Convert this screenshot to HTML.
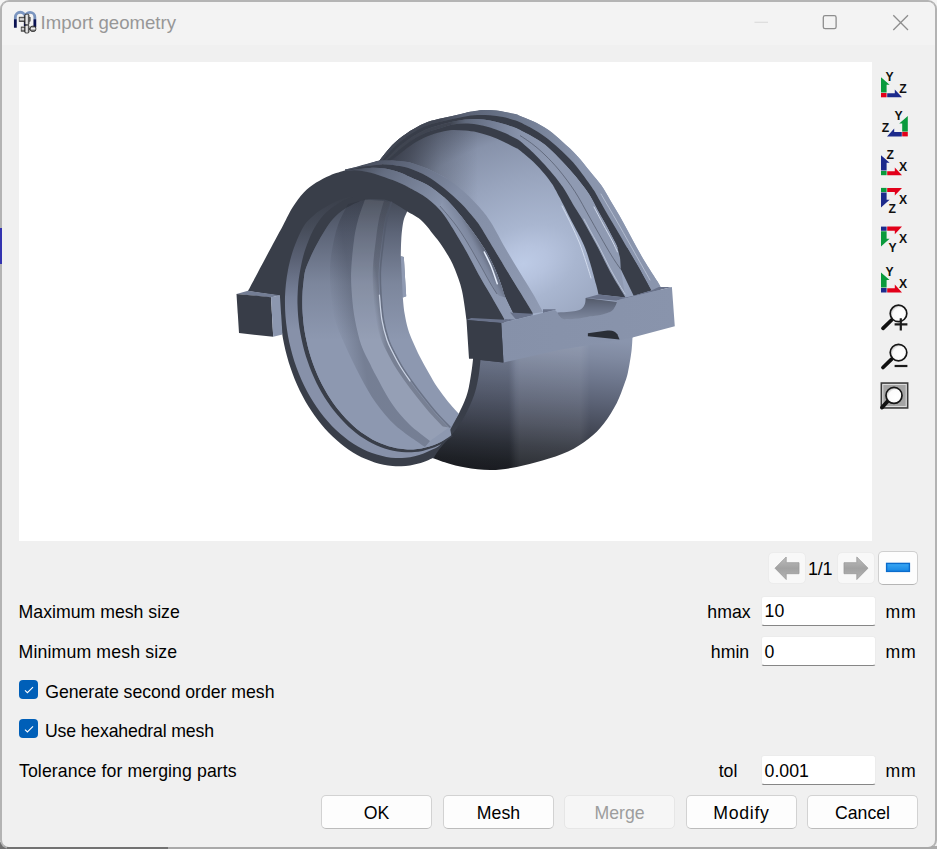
<!DOCTYPE html>
<html><head><meta charset="utf-8"><title>Import geometry</title>
<style>
html,body{margin:0;padding:0;}
body{width:937px;height:849px;overflow:hidden;background:#f0f0f0;position:relative;font-family:"Liberation Sans",sans-serif;color:#000;}
.abs{position:absolute;}
#bgtop{left:0;top:0;width:937px;height:10px;background:#f4f4f4;}
#win{left:0;top:0;width:933px;height:845px;border:2px solid #b3b3b3;border-top-color:#b4b4b4;border-bottom-color:#a9a9a9;border-radius:9px;background:#f0f0f0;overflow:hidden;}
#titlebar{left:0;top:0;width:933px;height:43px;background:#f3f3f3;}
#title{left:40.6px;top:11.6px;font-size:18.6px;line-height:22px;color:#979797;white-space:nowrap;}
#canvas{left:19px;top:62px;width:853px;height:479px;background:#fff;}
.lbl{font-size:17.7px;line-height:22px;white-space:nowrap;}
.inp{left:761px;width:115px;height:30px;background:#fff;border:1px solid #ececec;border-bottom:1px solid #868686;border-radius:3px;box-sizing:border-box;font-size:17.7px;line-height:29.6px;padding-left:2.6px;padding-top:0.8px;}
.btn{top:795px;width:111px;height:34px;box-sizing:border-box;border:1px solid #d2d2d2;border-bottom-color:#bcbcbc;border-radius:5px;background:#fdfdfd;text-align:center;font-size:17.7px;line-height:34.6px;}
.btn.dis{background:#f6f6f6;border-color:#e6e6e6;color:#9d9d9d;}
.nb{top:552px;height:32px;box-sizing:border-box;border-radius:5px;}
.cb{left:19px;width:19px;height:19px;border-radius:4px;background:#005fb8;}
</style></head><body>
<div class="abs" id="bgtop"></div>
<div class="abs" style="left:0;top:842px;width:170px;height:7px;background:#6f6f6f"></div>
<div class="abs" style="left:170px;top:846px;width:767px;height:3px;background:#ababab"></div>
<div class="abs" style="left:0;top:227px;width:3px;height:37px;background:#2a2aa8"></div>
<div class="abs" id="win">
<div class="abs" id="titlebar"></div>
</div>
<div class="abs" style="left:7px;top:847px;width:161px;height:2px;background:#727272"></div>
<div class="abs" style="left:0;top:228px;width:2px;height:36px;background:#3434b0"></div>
<!-- title icon -->
<svg class="abs" style="left:12px;top:8px" width="28" height="27" viewBox="12 8 28 27">
<defs><linearGradient id="gm" gradientUnits="userSpaceOnUse" x1="0" y1="10" x2="0" y2="28"><stop offset="0" stop-color="#7d98c2"/><stop offset="0.5" stop-color="#7791bb"/><stop offset="0.54" stop-color="#0b1352"/><stop offset="1" stop-color="#0a1150"/></linearGradient>
<linearGradient id="gg" gradientUnits="userSpaceOnUse" x1="24.5" y1="0" x2="29.2" y2="0"><stop offset="0" stop-color="#3c3c3c"/><stop offset="0.3" stop-color="#cfcfcf"/><stop offset="0.5" stop-color="#f4f4f4"/><stop offset="0.7" stop-color="#c4c4c4"/><stop offset="1" stop-color="#353535"/></linearGradient>
<linearGradient id="gs" x1="0" y1="0" x2="0" y2="1"><stop offset="0" stop-color="#555"/><stop offset="0.45" stop-color="#f2f2f2"/><stop offset="1" stop-color="#4a4a4a"/></linearGradient></defs>
<path d="M15.35 27.8V17.2a4.95 4.95 0 0 1 9.9 0V26M25.25 17.2a4.8 4.8 0 0 1 9.6 0V27.2" fill="none" stroke="url(#gm)" stroke-width="2.8"/>
<rect x="19.2" y="17.2" width="6" height="4.3" fill="url(#gs)" stroke="#2e2e2e" stroke-width="0.7"/>
<rect x="28.6" y="17.4" width="1.6" height="3.8" fill="#888" stroke="#2e2e2e" stroke-width="0.5"/>
<rect x="24.7" y="14.2" width="4.3" height="10.6" rx="1.2" fill="url(#gg)" stroke="#262626" stroke-width="0.8"/>
<rect x="21.2" y="27" width="4" height="4.2" fill="url(#gs)" stroke="#2e2e2e" stroke-width="0.7"/>
<rect x="30.2" y="26.2" width="5.6" height="5.2" rx="2" fill="url(#gs)" stroke="#2a2a2a" stroke-width="0.9"/>
<rect x="24.7" y="25.2" width="4.3" height="7.8" rx="1.2" fill="url(#gg)" stroke="#262626" stroke-width="0.8"/>
<path d="M28.9 29H30.4" stroke="#333" stroke-width="1.6"/>
</svg>
<div class="abs" id="title">Import geometry</div>
<!-- caption buttons -->
<svg class="abs" style="left:740px;top:0" width="190" height="44" viewBox="740 0 190 44">
<path d="M754.5 22.3H768" stroke="#dcdcdc" stroke-width="1.2" fill="none"/>
<rect x="823.3" y="15.7" width="12.8" height="13" rx="1.8" fill="none" stroke="#8d8d8d" stroke-width="1.3"/>
<path d="M893.3 15.3L908 30M908 15.3L893.3 30" stroke="#8d8d8d" stroke-width="1.3" fill="none"/>
</svg>
<div class="abs" id="canvas"></div>
<svg class="abs" style="left:19px;top:62px" width="853" height="479" viewBox="19 62 853 479"><defs><linearGradient id="gShell" gradientUnits="userSpaceOnUse" x1="542" y1="336" x2="532" y2="474"><stop offset="0" stop-color="#8a95ad"/><stop offset="0.12" stop-color="#808aa1"/><stop offset="0.28" stop-color="#6e778d"/><stop offset="0.46" stop-color="#5a6174"/><stop offset="0.64" stop-color="#454a58"/><stop offset="0.8" stop-color="#2f333c"/><stop offset="0.92" stop-color="#22252b"/><stop offset="1" stop-color="#1c1e24"/></linearGradient><radialGradient id="gMid" gradientUnits="userSpaceOnUse" cx="523" cy="264" r="165" gradientTransform="translate(523 264) rotate(-22) scale(1.55 1) translate(-523 -264)"><stop offset="0" stop-color="#bdcbe6"/><stop offset="0.1" stop-color="#b6c3de"/><stop offset="0.22" stop-color="#a9b6d0"/><stop offset="0.5" stop-color="#98a4bd"/><stop offset="0.75" stop-color="#8792aa"/><stop offset="0.9" stop-color="#6a7388"/><stop offset="1" stop-color="#565d6f"/></radialGradient><linearGradient id="gBore" gradientUnits="userSpaceOnUse" x1="0" y1="198" x2="0" y2="340"><stop offset="0" stop-color="#434956"/><stop offset="0.25" stop-color="#5d6578"/><stop offset="0.6" stop-color="#7c869c"/><stop offset="1" stop-color="#8d98b0"/></linearGradient><linearGradient id="gStripD" gradientUnits="userSpaceOnUse" x1="440" y1="120" x2="580" y2="120"><stop offset="0" stop-color="#414653"/><stop offset="0.18" stop-color="#596174"/><stop offset="0.57" stop-color="#6f7a90"/><stop offset="0.93" stop-color="#8590a8"/><stop offset="1" stop-color="#8a95ad"/></linearGradient><linearGradient id="gStripC" gradientUnits="userSpaceOnUse" x1="450" y1="125" x2="550" y2="135"><stop offset="0" stop-color="#3f4450"/><stop offset="0.15" stop-color="#5f687b"/><stop offset="0.4" stop-color="#727c93"/><stop offset="0.7" stop-color="#8893ab"/><stop offset="1" stop-color="#8f9ab2"/></linearGradient><linearGradient id="gStripB" gradientUnits="userSpaceOnUse" x1="360" y1="165" x2="540" y2="313"><stop offset="0" stop-color="#474d5b"/><stop offset="0.12" stop-color="#5a6275"/><stop offset="0.4" stop-color="#828da5"/><stop offset="1" stop-color="#8f9ab2"/></linearGradient><linearGradient id="gStripA" gradientUnits="userSpaceOnUse" x1="350" y1="170" x2="515" y2="319"><stop offset="0" stop-color="#454b58"/><stop offset="0.12" stop-color="#646d81"/><stop offset="0.4" stop-color="#8792aa"/><stop offset="1" stop-color="#8f9ab2"/></linearGradient><linearGradient id="gLugF" gradientUnits="userSpaceOnUse" x1="500" y1="0" x2="676" y2="0"><stop offset="0" stop-color="#8691a9"/><stop offset="1" stop-color="#8994ac"/></linearGradient><linearGradient id="gNotch" gradientUnits="userSpaceOnUse" x1="0" y1="298" x2="0" y2="320"><stop offset="0" stop-color="#535a6a"/><stop offset="0.5" stop-color="#697287"/><stop offset="1" stop-color="#7f899f"/></linearGradient><linearGradient id="gCham" gradientUnits="userSpaceOnUse" x1="0" y1="200" x2="0" y2="330"><stop offset="0" stop-color="#3b404b"/><stop offset="0.2" stop-color="#454b58"/><stop offset="0.45" stop-color="#5a6174"/><stop offset="0.75" stop-color="#78829a"/><stop offset="1" stop-color="#8791a9"/></linearGradient><filter id="fb" x="-5%" y="-5%" width="110%" height="110%"><feGaussianBlur stdDeviation="0.7"/></filter><filter id="fb2" x="-20%" y="-20%" width="140%" height="140%"><feGaussianBlur stdDeviation="0.45"/></filter><clipPath id="cpShell"><path d="M476.0 330.0L640.0 330.0L632.5 337.4C632.3 339.7 632.2 345.2 631.5 351.0C630.8 356.8 629.2 366.3 628.0 372.0C626.8 377.7 625.9 379.9 624.0 385.0C622.1 390.1 620.1 396.5 616.8 402.9C613.4 409.3 608.6 417.4 603.9 423.4C599.2 429.4 594.6 434.1 588.6 438.8C582.6 443.5 575.8 448.0 568.1 451.6C560.4 455.2 551.0 458.0 542.5 460.6C534.0 463.2 525.3 465.4 516.8 467.0C508.2 468.6 499.7 470.0 491.2 470.1C482.7 470.2 473.0 468.7 465.6 467.5C458.2 466.3 452.4 464.6 447.0 463.0C441.6 461.4 435.3 458.8 433.0 458.0L429.5 457.5C430.4 456.1 432.0 452.7 435.0 448.8C438.0 444.9 443.8 438.6 447.5 434.0C451.2 429.4 454.2 425.7 457.2 421.0C460.2 416.3 463.0 410.9 465.3 405.8C467.6 400.7 469.6 395.8 471.2 390.5C472.8 385.2 473.9 379.2 474.8 374.0C475.7 368.8 476.2 361.5 476.5 359.0Z"/></clipPath><linearGradient id="gShellBand" gradientUnits="userSpaceOnUse" x1="510" y1="0" x2="590" y2="0"><stop offset="0" stop-color="#ffffff00"/><stop offset="0.12" stop-color="#ffffff12"/><stop offset="0.88" stop-color="#ffffff12"/><stop offset="1" stop-color="#ffffff00"/></linearGradient><linearGradient id="gShellL" gradientUnits="userSpaceOnUse" x1="478" y1="0" x2="516" y2="0"><stop offset="0" stop-color="#0000001c"/><stop offset="0.8" stop-color="#0000001c"/><stop offset="1" stop-color="#00000000"/></linearGradient><linearGradient id="gMidL" gradientUnits="userSpaceOnUse" x1="383" y1="0" x2="478" y2="0"><stop offset="0" stop-color="#2e323cd0"/><stop offset="0.28" stop-color="#343843a0"/><stop offset="0.6" stop-color="#3a3f4a48"/><stop offset="1" stop-color="#3a3f4a00"/></linearGradient><linearGradient id="gSliver" gradientUnits="userSpaceOnUse" x1="470" y1="262" x2="489" y2="252"><stop offset="0" stop-color="#8f9ab2"/><stop offset="0.55" stop-color="#7b859c"/><stop offset="1" stop-color="#4a5060"/></linearGradient><linearGradient id="gB11" gradientUnits="userSpaceOnUse" x1="330" y1="300" x2="353" y2="296"><stop offset="0" stop-color="#20243000"/><stop offset="1" stop-color="#20243038"/></linearGradient><linearGradient id="gB22" gradientUnits="userSpaceOnUse" x1="373" y1="300" x2="380" y2="299"><stop offset="0" stop-color="#20243000"/><stop offset="1" stop-color="#20243040"/></linearGradient></defs><path d="M476.0 330.0L640.0 330.0L632.5 337.4C632.3 339.7 632.2 345.2 631.5 351.0C630.8 356.8 629.2 366.3 628.0 372.0C626.8 377.7 625.9 379.9 624.0 385.0C622.1 390.1 620.1 396.5 616.8 402.9C613.4 409.3 608.6 417.4 603.9 423.4C599.2 429.4 594.6 434.1 588.6 438.8C582.6 443.5 575.8 448.0 568.1 451.6C560.4 455.2 551.0 458.0 542.5 460.6C534.0 463.2 525.3 465.4 516.8 467.0C508.2 468.6 499.7 470.0 491.2 470.1C482.7 470.2 473.0 468.7 465.6 467.5C458.2 466.3 452.4 464.6 447.0 463.0C441.6 461.4 435.3 458.8 433.0 458.0L429.5 457.5C430.4 456.1 432.0 452.7 435.0 448.8C438.0 444.9 443.8 438.6 447.5 434.0C451.2 429.4 454.2 425.7 457.2 421.0C460.2 416.3 463.0 410.9 465.3 405.8C467.6 400.7 469.6 395.8 471.2 390.5C472.8 385.2 473.9 379.2 474.8 374.0C475.7 368.8 476.2 361.5 476.5 359.0Z" fill="url(#gShell)" />
<path d="M510.0 340.0L590.0 330.0L590.0 460.0L510.0 472.0Z" fill="url(#gShellBand)" />
<path d="M430.0 355.0L520.0 355.0L520.0 475.0L430.0 475.0Z" fill="url(#gShellL)" clip-path="url(#cpShell)"/>
<path d="M379.4 160.6C380.5 159.2 383.6 154.9 386.2 151.9C388.8 148.9 391.0 146.0 395.0 142.5C399.0 139.0 405.1 134.3 410.0 131.1C414.9 127.9 419.4 125.4 424.1 123.4C428.8 121.4 433.6 120.3 438.3 119.1C443.0 117.9 447.9 117.0 452.4 116.0C456.8 115.0 461.2 113.7 465.0 112.9C468.8 112.1 471.6 111.5 475.0 111.0C478.4 110.5 481.4 110.0 485.6 110.0C489.8 110.0 495.1 110.2 500.0 110.9C504.9 111.6 511.7 113.3 515.0 114.1C518.3 114.9 517.0 114.7 520.0 115.9C523.0 117.1 528.2 119.0 533.0 121.3C537.8 123.6 543.5 126.5 548.5 130.0C553.5 133.4 558.0 137.8 562.7 142.0C567.4 146.2 572.1 150.3 576.8 155.4C581.5 160.5 586.8 167.5 590.9 172.4C595.0 177.3 597.9 180.4 601.1 185.0C604.3 189.6 607.1 194.9 610.1 199.9C613.1 204.9 616.1 209.7 619.1 214.9C622.1 220.1 625.0 225.8 628.0 231.3C631.0 236.8 634.0 242.6 637.0 248.0C640.0 253.4 642.6 258.0 646.0 263.5C649.4 269.0 654.8 277.2 657.2 281.1C659.6 285.0 660.0 286.0 660.5 287.0L660.5 287.0L660.0 330.0L480.0 330.0L440.0 216.0L410.0 188.0L370.0 173.0L345.0 172.0L345.0 169.4L360.0 166.2Z" fill="url(#gMid)" />
<path d="M379.4 160.6C380.5 159.2 383.6 154.9 386.2 151.9C388.8 148.9 391.0 146.0 395.0 142.5C399.0 139.0 405.1 134.3 410.0 131.1C414.9 127.9 419.4 125.4 424.1 123.4C428.8 121.4 433.6 120.3 438.3 119.1C443.0 117.9 447.9 117.0 452.4 116.0C456.8 115.0 461.2 113.7 465.0 112.9C468.8 112.1 473.3 111.3 475.0 111.0L478.0 111.0L478.3 206.1L461.2 189.0L444.2 177.1L427.1 168.5L410.0 162.4L392.3 160.5L378.8 160.8Z" fill="url(#gMidL)" />
<path d="M379.4 160.6C380.5 159.2 383.6 154.9 386.2 151.9C388.8 148.9 391.0 146.0 395.0 142.5C399.0 139.0 405.1 134.3 410.0 131.1C414.9 127.9 419.4 125.4 424.1 123.4C428.8 121.4 433.6 120.3 438.3 119.1C443.0 117.9 447.9 117.0 452.4 116.0C456.8 115.0 461.2 113.7 465.0 112.9C468.8 112.1 471.6 111.5 475.0 111.0C478.4 110.5 481.4 110.0 485.6 110.0C489.8 110.0 495.1 110.2 500.0 110.9C504.9 111.6 511.7 113.3 515.0 114.1C518.3 114.9 517.0 114.7 520.0 115.9C523.0 117.1 528.2 119.0 533.0 121.3C537.8 123.6 543.5 126.5 548.5 130.0C553.5 133.4 558.0 137.8 562.7 142.0C567.4 146.2 572.1 150.3 576.8 155.4C581.5 160.5 586.8 167.5 590.9 172.4C595.0 177.3 597.9 180.4 601.1 185.0C604.3 189.6 607.1 194.9 610.1 199.9C613.1 204.9 616.1 209.7 619.1 214.9C622.1 220.1 625.0 225.8 628.0 231.3C631.0 236.8 634.0 242.6 637.0 248.0C640.0 253.4 642.6 258.0 646.0 263.5C649.4 269.0 654.8 277.2 657.2 281.1C659.6 285.0 660.0 286.0 660.5 287.0L651.3 290.5C649.2 286.8 643.0 275.1 639.0 268.0C635.0 260.9 630.5 253.5 627.3 248.0C624.1 242.5 622.3 239.4 619.8 235.1C617.3 230.8 614.9 226.6 612.4 222.4C609.9 218.2 607.4 214.1 604.9 209.7C602.4 205.3 599.2 199.5 597.4 196.2C595.5 192.9 595.5 192.6 593.8 190.0C592.1 187.4 590.8 185.5 587.4 180.9C584.0 176.3 578.0 167.9 573.3 162.5C568.6 157.1 563.8 152.7 559.1 148.4C554.4 144.1 549.4 139.9 545.0 136.7C540.6 133.5 537.2 131.4 533.0 129.0C528.8 126.6 523.0 123.8 520.0 122.3C517.0 120.8 517.8 121.2 515.0 120.3C512.2 119.4 507.2 117.8 503.0 117.0C498.8 116.2 494.3 115.6 490.0 115.3C485.7 115.0 481.2 114.8 477.0 115.0C472.8 115.2 469.1 115.8 465.0 116.5C460.9 117.2 456.7 118.1 452.4 119.0C448.1 119.9 443.6 120.8 439.0 122.0C434.4 123.2 429.7 124.3 425.0 126.3C420.3 128.3 415.8 130.9 411.0 134.0C406.2 137.1 400.3 141.7 396.5 145.0C392.7 148.3 390.6 151.2 388.0 154.0C385.4 156.8 382.2 160.7 381.0 162.0Z" fill="url(#gStripD)" />
<path d="M381.0 162.0C382.2 160.7 385.4 156.8 388.0 154.0C390.6 151.2 392.7 148.3 396.5 145.0C400.3 141.7 406.2 137.1 411.0 134.0C415.8 130.9 420.3 128.3 425.0 126.3C429.7 124.3 434.4 123.2 439.0 122.0C443.6 120.8 448.1 119.9 452.4 119.0C456.7 118.1 460.9 117.2 465.0 116.5C469.1 115.8 472.8 115.2 477.0 115.0C481.2 114.8 485.7 115.0 490.0 115.3C494.3 115.6 498.8 116.2 503.0 117.0C507.2 117.8 512.2 119.4 515.0 120.3C517.8 121.2 517.0 120.8 520.0 122.3C523.0 123.8 528.8 126.6 533.0 129.0C537.2 131.4 540.6 133.5 545.0 136.7C549.4 139.9 554.4 144.1 559.1 148.4C563.8 152.7 568.6 157.1 573.3 162.5C578.0 167.9 584.0 176.3 587.4 180.9C590.8 185.5 592.1 187.4 593.8 190.0C595.5 192.6 595.5 192.9 597.4 196.2C599.2 199.5 602.4 205.3 604.9 209.7C607.4 214.1 609.9 218.2 612.4 222.4C614.9 226.6 617.3 230.8 619.8 235.1C622.3 239.4 624.1 242.5 627.3 248.0C630.5 253.5 635.0 260.9 639.0 268.0C643.0 275.1 649.2 286.8 651.3 290.5L620.8 269.3C620.7 267.6 620.8 262.6 620.3 259.0C619.8 255.4 618.9 251.6 617.6 248.0C616.3 244.4 614.5 241.5 612.4 237.3C610.3 233.2 607.4 227.7 604.9 223.1C602.4 218.5 599.9 214.3 597.4 209.7C594.9 205.1 592.3 199.4 589.9 195.5C587.5 191.6 586.0 189.6 583.2 186.0C580.4 182.4 577.3 178.4 573.3 173.8C569.3 169.2 563.8 163.1 559.1 158.3C554.4 153.5 549.4 148.4 545.0 144.8C540.6 141.2 537.2 139.5 533.0 137.0C528.8 134.5 523.0 131.6 520.0 130.0C517.0 128.4 517.8 128.7 515.0 127.7C512.2 126.7 507.2 125.0 503.0 123.8C498.8 122.6 494.3 121.3 490.0 120.5C485.7 119.7 481.2 119.2 477.0 119.0C472.8 118.8 469.1 119.0 465.0 119.4C460.9 119.9 456.6 120.8 452.4 121.7C448.2 122.6 444.4 123.7 440.0 125.0C435.6 126.3 430.7 127.5 426.0 129.5C421.3 131.5 416.7 134.0 412.0 137.0C407.3 140.0 401.8 144.3 398.0 147.5C394.2 150.7 392.2 153.4 389.5 156.0C386.8 158.6 382.8 161.8 381.5 163.0Z" fill="#393e49" filter="url(#fb)"/>
<path d="M381.5 163.0C382.8 161.8 386.8 158.6 389.5 156.0C392.2 153.4 394.2 150.7 398.0 147.5C401.8 144.3 407.3 140.0 412.0 137.0C416.7 134.0 421.3 131.5 426.0 129.5C430.7 127.5 435.6 126.3 440.0 125.0C444.4 123.7 448.2 122.6 452.4 121.7C456.6 120.8 460.9 119.9 465.0 119.4C469.1 119.0 472.8 118.8 477.0 119.0C481.2 119.2 485.7 119.7 490.0 120.5C494.3 121.3 498.8 122.6 503.0 123.8C507.2 125.0 512.2 126.7 515.0 127.7C517.8 128.7 517.0 128.4 520.0 130.0C523.0 131.6 528.8 134.5 533.0 137.0C537.2 139.5 540.6 141.2 545.0 144.8C549.4 148.4 554.4 153.5 559.1 158.3C563.8 163.1 569.3 169.2 573.3 173.8C577.3 178.4 580.4 182.4 583.2 186.0C586.0 189.6 587.5 191.6 589.9 195.5C592.3 199.4 594.9 205.1 597.4 209.7C599.9 214.3 602.4 218.5 604.9 223.1C607.4 227.7 610.3 233.2 612.4 237.3C614.5 241.5 616.3 244.4 617.6 248.0C618.9 251.6 619.8 255.4 620.3 259.0C620.8 262.6 620.7 267.6 620.8 269.3L625.5 297.5C623.0 293.2 614.8 279.9 610.2 271.7C605.7 263.4 601.6 254.5 598.2 248.0C594.8 241.5 592.5 237.6 589.9 232.8C587.3 228.0 585.0 223.6 582.5 219.4C580.0 215.2 578.0 212.3 575.0 207.4C572.0 202.5 567.4 194.2 564.8 190.0C562.1 185.8 561.2 184.8 559.1 182.0C557.0 179.2 554.5 176.1 552.1 173.3C549.8 170.5 548.2 168.5 545.0 165.0C541.8 161.5 537.2 156.5 533.0 152.5C528.8 148.5 523.0 143.4 520.0 141.0C517.0 138.6 517.8 139.3 515.0 137.9C512.2 136.5 507.2 134.0 503.0 132.3C498.8 130.6 494.3 128.8 490.0 127.5C485.7 126.2 481.2 125.2 477.0 124.6C472.8 123.9 469.1 123.6 465.0 123.6C460.9 123.6 456.5 123.9 452.4 124.6C448.3 125.3 444.7 126.7 440.5 128.0C436.3 129.3 431.6 130.4 427.0 132.3C422.4 134.2 417.6 136.6 413.0 139.5C408.4 142.4 403.2 146.5 399.5 149.5C395.8 152.5 393.4 155.1 390.5 157.5C387.6 159.9 383.4 162.9 382.0 164.0Z" fill="url(#gStripC)" />
<path d="M382.0 164.0C383.4 162.9 387.6 159.9 390.5 157.5C393.4 155.1 395.8 152.5 399.5 149.5C403.2 146.5 408.4 142.4 413.0 139.5C417.6 136.6 422.4 134.2 427.0 132.3C431.6 130.4 436.3 129.3 440.5 128.0C444.7 126.7 448.3 125.3 452.4 124.6C456.5 123.9 460.9 123.6 465.0 123.6C469.1 123.6 472.8 123.9 477.0 124.6C481.2 125.2 485.7 126.2 490.0 127.5C494.3 128.8 498.8 130.6 503.0 132.3C507.2 134.0 512.2 136.5 515.0 137.9C517.8 139.3 517.0 138.6 520.0 141.0C523.0 143.4 528.8 148.5 533.0 152.5C537.2 156.5 541.8 161.5 545.0 165.0C548.2 168.5 549.8 170.5 552.1 173.3C554.5 176.1 557.0 179.2 559.1 182.0C561.2 184.8 562.1 185.8 564.8 190.0C567.4 194.2 572.0 202.5 575.0 207.4C578.0 212.3 580.0 215.2 582.5 219.4C585.0 223.6 587.3 228.0 589.9 232.8C592.5 237.6 594.8 241.5 598.2 248.0C601.6 254.5 605.7 263.4 610.2 271.7C614.8 279.9 623.0 293.2 625.5 297.5L598.5 294.6C598.1 292.9 597.5 289.8 596.1 284.6C594.7 279.4 592.1 269.4 590.3 263.5C588.5 257.6 587.2 253.4 585.5 249.0C583.8 244.6 581.9 240.7 580.2 237.3C578.5 233.9 577.2 231.7 575.5 228.5C573.8 225.3 572.1 222.1 570.0 218.0C567.9 213.9 565.4 208.7 563.0 204.0C560.6 199.3 557.4 193.3 555.6 190.0C553.8 186.7 553.9 186.6 552.1 184.0C550.3 181.4 548.2 178.2 545.0 174.5C541.8 170.8 537.2 165.5 533.0 161.5C528.8 157.5 523.0 152.7 520.0 150.4C517.0 148.1 517.8 149.0 515.0 147.5C512.2 146.0 507.2 143.4 503.0 141.5C498.8 139.6 494.3 137.5 490.0 136.0C485.7 134.5 481.2 133.2 477.0 132.3C472.8 131.4 469.1 131.0 465.0 130.6C460.9 130.2 456.4 129.8 452.4 130.0C448.4 130.2 445.1 130.9 441.0 132.0C436.9 133.1 432.0 134.4 427.5 136.3C423.0 138.2 418.3 140.6 414.0 143.3C409.7 146.0 405.2 149.8 401.5 152.5C397.8 155.2 395.2 157.4 392.0 159.5C388.8 161.6 384.1 164.1 382.5 165.0Z" fill="#393e49" filter="url(#fb)"/>
<path d="M520.0 135.5C522.2 137.0 528.8 141.2 533.0 144.5C537.2 147.8 540.7 150.8 545.0 155.0C549.3 159.2 554.0 163.9 559.0 170.0C564.0 176.1 569.8 183.7 575.0 191.7C580.2 199.7 584.7 208.6 590.0 218.0C595.3 227.4 602.8 240.8 607.0 248.0C611.2 255.2 612.7 257.4 615.0 261.0C617.3 264.6 619.8 267.9 620.8 269.3" fill="none" stroke="#4a5060" stroke-width="0.8" opacity="0.8"/>
<path d="M620.8 269.3L633.7 295.8L651.3 290.5L639.0 268.0L627.3 248.0L617.6 248.0L620.3 259.0Z" fill="#393e49" />
<path d="M594.0 207.0C595.5 209.8 600.0 218.3 603.0 224.0C606.0 229.7 609.9 236.3 612.3 241.0C614.7 245.7 616.6 250.2 617.5 252.0" fill="none" stroke="#e6eefc" stroke-linecap="round" filter="url(#fb2)" stroke-width="1" opacity="0.75"/>
<path d="M601.0 194.0C603.3 198.0 609.8 209.0 615.0 218.0C620.2 227.0 626.2 237.7 632.0 248.0C637.8 258.3 647.0 274.7 650.0 280.0" fill="none" stroke="#e6eefc" stroke-linecap="round" filter="url(#fb2)" stroke-width="0.9" opacity="0.5"/>
<path d="M584.0 219.0C585.2 221.3 588.8 228.1 591.5 233.0C594.2 237.9 596.6 242.0 600.0 248.5C603.4 255.0 607.8 264.4 612.0 272.0C616.2 279.6 622.8 290.3 625.0 294.0" fill="none" stroke="#e6eefc" stroke-linecap="round" filter="url(#fb2)" stroke-width="0.9" opacity="0.55"/>
<path d="M562.0 206.0C563.5 209.0 568.1 217.8 571.0 224.0C573.9 230.2 577.0 236.7 579.5 243.0C582.0 249.3 584.1 256.2 586.0 262.0C587.9 267.8 590.2 275.3 591.0 278.0" fill="none" stroke="#e6eefc" stroke-linecap="round" filter="url(#fb2)" stroke-width="1" opacity="0.7"/>
<path d="M345.0 169.6C346.6 169.2 350.8 168.3 354.9 167.2C359.0 166.1 365.9 164.2 369.9 163.1C373.9 162.0 375.1 161.2 378.8 160.8C382.5 160.4 387.1 160.2 392.3 160.5C397.5 160.8 404.2 161.1 410.0 162.4C415.8 163.7 421.4 166.1 427.1 168.5C432.8 170.9 438.5 173.7 444.2 177.1C449.9 180.5 455.5 184.2 461.2 189.0C466.9 193.8 473.3 200.5 478.3 206.1C483.3 211.7 486.5 215.4 491.0 222.5C495.5 229.6 500.7 240.2 505.5 248.5C510.3 256.8 515.1 264.6 519.6 272.0C524.1 279.4 528.6 286.5 532.5 293.1C536.4 299.8 541.2 308.8 543.0 311.9L533.1 313.6C531.0 310.2 524.9 300.0 520.7 293.1C516.5 286.2 512.3 279.4 507.8 272.0C503.3 264.6 498.2 255.9 493.7 248.5C489.2 241.1 484.3 232.6 481.0 227.5C477.7 222.4 477.3 222.1 474.0 218.1C470.7 214.1 466.2 208.6 461.2 203.6C456.2 198.6 449.9 192.8 444.2 188.2C438.5 183.6 432.8 179.5 427.1 176.2C421.4 172.9 414.6 170.3 410.0 168.6C405.4 166.9 404.0 166.8 399.8 166.1C395.6 165.4 391.0 164.3 384.8 164.4C378.6 164.5 367.4 165.8 362.4 166.5C357.4 167.2 357.8 167.9 354.9 168.6C352.0 169.2 346.6 170.1 345.0 170.4Z" fill="url(#gStripB)" />
<path d="M345.0 170.4C346.6 170.1 352.0 169.2 354.9 168.6C357.8 167.9 357.4 167.2 362.4 166.5C367.4 165.8 378.6 164.5 384.8 164.4C391.0 164.3 395.6 165.4 399.8 166.1C404.0 166.8 405.4 166.9 410.0 168.6C414.6 170.3 421.4 172.9 427.1 176.2C432.8 179.5 438.5 183.6 444.2 188.2C449.9 192.8 456.2 198.6 461.2 203.6C466.2 208.6 470.7 214.1 474.0 218.1C477.3 222.1 477.7 222.4 481.0 227.5C484.3 232.6 489.2 241.1 493.7 248.5C498.2 255.9 503.3 264.6 507.8 272.0C512.3 279.4 516.5 286.2 520.7 293.1C524.9 300.0 531.0 310.2 533.1 313.6L516.0 318.9C514.2 315.4 508.0 303.7 505.5 297.8C503.0 291.9 502.8 289.0 500.8 283.7C498.8 278.4 496.4 272.0 493.7 266.1C490.9 260.2 488.4 255.1 484.3 248.5C480.2 241.9 473.6 232.7 469.0 226.5C464.4 220.3 461.1 216.0 457.0 211.2C452.9 206.4 449.2 202.0 444.2 197.6C439.2 193.2 432.8 188.2 427.1 184.8C421.4 181.4 414.6 179.1 410.0 177.0C405.4 174.9 404.0 173.8 399.8 172.4C395.6 171.0 389.8 169.2 384.8 168.5C379.8 167.8 374.9 167.8 369.9 167.9C364.9 168.1 359.0 168.9 354.9 169.4C350.8 169.9 346.6 170.6 345.0 170.8Z" fill="#393e49" filter="url(#fb)"/>
<path d="M345.0 170.8C346.6 170.6 350.8 169.9 354.9 169.4C359.0 168.9 364.9 168.1 369.9 167.9C374.9 167.8 379.8 167.8 384.8 168.5C389.8 169.2 395.6 171.0 399.8 172.4C404.0 173.8 405.4 174.9 410.0 177.0C414.6 179.1 421.4 181.4 427.1 184.8C432.8 188.2 439.2 193.2 444.2 197.6C449.2 202.0 452.9 206.4 457.0 211.2C461.1 216.0 464.4 220.3 469.0 226.5C473.6 232.7 480.2 241.9 484.3 248.5C488.4 255.1 490.9 260.2 493.7 266.1C496.4 272.0 498.8 278.4 500.8 283.7C502.8 289.0 503.0 291.9 505.5 297.8C508.0 303.7 514.2 315.4 516.0 318.9L504.3 318.9C501.9 314.8 494.5 301.7 490.2 294.3C485.9 286.9 482.4 281.4 478.5 274.3C474.6 267.2 471.0 259.7 466.7 252.0C462.4 244.3 456.4 234.4 452.7 228.3C448.9 222.2 447.0 219.0 444.2 215.2C441.4 211.4 438.5 208.4 435.6 205.6C432.8 202.8 430.0 200.3 427.1 198.2C424.2 196.1 421.4 194.5 418.5 192.8C415.6 191.1 413.1 189.7 410.0 188.0C406.9 186.3 404.0 184.7 399.8 182.9C395.6 181.1 389.8 179.1 384.8 177.3C379.8 175.6 374.9 173.6 369.9 172.4C364.9 171.2 359.0 170.4 354.9 170.2C350.8 170.0 346.6 171.1 345.0 171.3Z" fill="url(#gStripA)" />
<path d="M440.0 206.0C442.5 209.0 450.5 218.0 455.0 224.0C459.5 230.0 463.1 235.7 467.0 242.0C470.9 248.3 474.6 255.2 478.5 262.0C482.4 268.8 487.1 277.7 490.2 283.0C493.3 288.3 494.6 291.6 497.0 294.0C499.4 296.4 503.1 296.7 504.3 297.2L505.5 297.8C504.7 295.4 502.8 289.0 500.8 283.7C498.8 278.4 496.4 272.0 493.7 266.1C490.9 260.2 488.4 255.1 484.3 248.5C480.2 241.9 473.6 232.7 469.0 226.5C464.4 220.3 461.1 216.0 457.0 211.2C452.9 206.4 446.3 199.9 444.2 197.6Z" fill="url(#gSliver)" opacity="0.85"/>
<path d="M440.0 206.0C442.5 209.0 450.5 218.0 455.0 224.0C459.5 230.0 463.1 235.7 467.0 242.0C470.9 248.3 474.6 255.2 478.5 262.0C482.4 268.8 487.1 277.7 490.2 283.0C493.3 288.3 495.9 292.2 497.0 294.0" fill="none" stroke="#4f5667" stroke-width="0.8" opacity="0.75"/>
<path d="M484.3 252.0C485.4 254.3 488.8 260.7 491.0 266.0C493.2 271.3 496.2 280.8 497.3 283.7" fill="none" stroke="#e6eefc" stroke-linecap="round" filter="url(#fb2)" stroke-width="1.5"/>
<path d="M248.0 291.0C251.0 285.4 260.0 268.4 265.8 257.5C271.6 246.6 278.6 233.8 283.0 225.5C287.4 217.2 289.0 213.1 292.5 207.6C296.0 202.1 299.9 196.8 303.8 192.6C307.8 188.4 311.8 185.5 316.2 182.6C320.6 179.7 325.2 177.4 330.0 175.4C334.8 173.4 342.5 171.4 345.0 170.6L345.0 171.3C346.6 171.1 350.8 170.0 354.9 170.2C359.0 170.4 364.9 171.2 369.9 172.4C374.9 173.6 379.8 175.6 384.8 177.3C389.8 179.1 395.6 181.1 399.8 182.9C404.0 184.7 406.9 186.3 410.0 188.0C413.1 189.7 415.6 191.1 418.5 192.8C421.4 194.5 424.2 196.1 427.1 198.2C430.0 200.3 432.8 202.8 435.6 205.6C438.5 208.4 441.4 211.4 444.2 215.2C447.0 219.0 448.9 222.2 452.7 228.3C456.4 234.4 462.4 244.3 466.7 252.0C471.0 259.7 474.6 267.2 478.5 274.3C482.4 281.4 485.9 286.9 490.2 294.3C494.5 301.7 501.9 314.8 504.3 318.9L504.3 318.9L503.5 362.5L480.5 360.0L480.5 360.0C480.2 362.5 479.7 369.8 478.8 375.0C477.9 380.2 476.8 386.2 475.2 391.5C473.6 396.8 471.6 401.7 469.3 406.8C467.0 411.9 464.2 417.3 461.2 422.0C458.2 426.7 455.2 430.4 451.5 435.0C447.8 439.6 442.0 445.9 439.0 449.8C436.0 453.7 434.4 457.1 433.5 458.5L433.0 458.0C432.0 458.4 429.3 459.7 426.9 460.7C424.5 461.6 421.4 462.7 418.6 463.5C415.8 464.3 412.9 464.9 410.0 465.4C407.2 465.8 404.2 466.1 401.3 466.2C398.4 466.3 395.4 466.2 392.5 466.0C389.5 465.7 386.5 465.3 383.6 464.7C380.6 464.1 377.6 463.4 374.7 462.4C371.7 461.5 368.8 460.4 365.8 459.1C362.9 457.9 360.0 456.5 357.2 454.9C354.3 453.3 351.5 451.6 348.7 449.7C345.9 447.8 343.2 445.7 340.5 443.5C337.8 441.3 335.1 439.0 332.6 436.5C330.0 434.1 327.5 431.4 325.0 428.7C322.6 426.0 320.2 423.1 317.9 420.1C315.7 417.1 313.4 414.0 311.3 410.8C309.2 407.6 307.2 404.3 305.2 400.9C303.3 397.5 301.5 394.0 299.7 390.4C298.0 386.8 296.3 383.2 294.8 379.4C293.3 375.7 291.9 371.9 290.6 368.0C289.2 364.2 288.1 360.3 287.0 356.3C285.9 352.4 284.9 348.4 284.1 344.3C283.3 340.3 282.5 336.3 281.9 332.2C281.3 328.2 280.9 324.1 280.5 320.0C280.2 315.9 280.0 311.9 279.9 307.8C279.8 303.8 279.9 297.7 279.9 295.7Z" fill="#393e49" />
<path d="M466.5 320.0L471.2 318.1L505.0 319.8L504.3 318.9L516.0 319.5L501.2 323.1Z" fill="#69728a" />
<path d="M510.0 312.5L532.5 313.8L533.1 315.3L516.0 319.5Z" fill="#69728a" />
<path d="M543.0 309.2L556.0 309.3L555.0 310.0L543.0 312.9Z" fill="#69728a" />
<path d="M616.7 300.5L625.5 297.5L633.7 295.8L651.3 290.5L658.9 287.0L671.9 287.0Z" fill="#69728a" />
<path d="M598.5 294.6L625.5 297.5L616.7 300.7L585.6 298.1Z" fill="#69728a" />
<path d="M501.2 323.1L555.0 310.0L557.5 312.5L560.0 317.0L566.0 319.5L590.0 316.5L608.8 312.5L615.0 307.5L616.7 300.5L671.9 287.0L674.8 326.3L632.5 337.4L620.0 340.0L558.8 350.0L503.5 362.5Z" fill="url(#gLugF)" />
<path d="M557.5 312.5C558.5 316 561 319 566 319.5C575 319 583 318 590 316.5C598 315.5 604 314.5 608.8 312.5C612.5 311 615 308.5 616.9 301.9L585.6 298.1C585.5 301 585.5 304 583.8 306.2C582 308.7 580 310 577.5 310.6C573 311.8 567 312.3 557.5 312.5Z" fill="url(#gNotch)" />
<path d="M558.8 350C562 346 563 340.5 567.5 337.6L588 335.6L620 340Z" fill="#8792aa" opacity="0.0"/>
<path d="M587.9 333.3L607.5 330.6C612 330 615.5 331.5 617.3 334.2L619.6 339.6L587.9 336.3Z" fill="#2a2e36" />
<path d="M466.5 320.0L501.2 323.1L503.5 362.5L469.0 358.8Z" fill="#383d48" />
<path d="M236.5 294.0L248.0 290.8L279.9 295.2L271.0 297.4Z" fill="#737d94" />
<path d="M236.5 294.0L271.0 297.2L273.2 336.8L239.0 333.0Z" fill="#383d48" />
<path d="M271.0 297.2L279.9 295.2L282.4 334.6L273.2 336.8Z" fill="#8c97af" />
<path d="M352.0 196.3C349.2 197.2 340.3 199.5 335.0 201.9C329.7 204.3 323.8 208.1 320.0 210.5C316.2 212.9 315.1 214.1 312.5 216.5C309.9 218.9 307.1 221.1 304.5 225.0C301.9 228.9 299.2 234.8 297.0 240.0C294.8 245.2 292.8 251.0 291.3 256.0C289.8 261.0 288.9 265.4 288.0 270.0C287.1 274.6 286.4 279.4 285.9 283.9C285.4 288.3 285.2 292.4 285.0 296.7C284.9 301.0 285.0 305.3 285.1 309.7C285.3 314.0 285.6 318.4 286.1 322.8C286.6 327.1 287.2 331.5 288.0 335.9C288.8 340.2 289.7 344.5 290.8 348.8C291.9 353.1 293.1 357.3 294.4 361.5C295.8 365.6 297.3 369.7 298.9 373.8C300.5 377.8 302.3 381.7 304.1 385.6C306.0 389.4 308.0 393.2 310.1 396.8C312.2 400.4 314.4 403.9 316.8 407.3C319.1 410.7 321.5 414.0 324.0 417.1C326.6 420.2 329.2 423.1 331.9 425.9C334.6 428.7 337.4 431.4 340.2 433.8C343.0 436.3 346.0 438.6 348.9 440.7C351.9 442.8 354.9 444.8 358.0 446.5C361.0 448.2 364.2 449.8 367.3 451.2C370.4 452.5 373.6 453.7 376.8 454.6C379.9 455.6 383.1 456.3 386.3 456.9C389.5 457.4 392.7 457.8 395.9 457.9C399.0 458.0 402.2 457.9 405.3 457.7C408.5 457.4 411.6 456.9 414.6 456.2C417.7 455.5 420.7 454.6 423.6 453.5C426.6 452.4 429.5 451.1 432.3 449.6C435.1 448.1 437.6 447.8 440.6 444.5C443.5 441.2 447.0 435.1 450.0 430.0C453.0 424.9 457.3 416.5 458.8 413.8L458.8 413.8L445.0 390.0L420.0 300.0L407.2 211.5L399.8 206.8L392.3 202.3L384.8 199.7L369.9 198.9L360.9 200.8L352.0 196.3Z" fill="url(#gCham)" />
<path d="M352.0 196.8C350.0 197.8 344.3 199.9 340.0 202.5C335.7 205.1 330.2 208.8 326.2 212.5C322.2 216.2 319.1 220.4 316.2 225.0C313.3 229.6 310.9 234.8 308.8 240.0C306.7 245.2 304.7 251.0 303.3 256.0C301.9 261.0 301.0 266.0 300.2 270.2C299.4 274.4 299.0 277.5 298.5 281.2C298.1 285.0 297.8 288.8 297.7 292.6C297.5 296.4 297.4 300.2 297.5 304.1C297.6 308.0 297.8 311.9 298.1 315.7C298.4 319.6 298.9 323.5 299.4 327.4C300.0 331.3 300.7 335.2 301.5 339.0C302.3 342.8 303.2 346.7 304.2 350.4C305.3 354.2 306.4 357.9 307.7 361.6C308.9 365.3 310.3 368.9 311.8 372.5C313.3 376.0 314.9 379.5 316.5 382.9C318.2 386.3 320.0 389.7 321.9 392.9C323.8 396.1 325.7 399.3 327.8 402.3C329.8 405.3 332.0 408.2 334.2 411.0C336.4 413.8 338.7 416.5 341.1 419.1C343.4 421.7 345.8 424.1 348.3 426.4C350.8 428.7 353.4 430.9 356.0 432.9C358.6 434.9 361.2 436.8 363.9 438.5C366.6 440.2 369.3 441.8 372.1 443.2C374.8 444.6 377.6 445.9 380.4 447.0C383.2 448.1 386.0 449.0 388.9 449.8C391.7 450.5 394.5 451.1 397.4 451.6C400.2 452.0 403.0 452.3 405.9 452.3C408.7 452.4 411.5 452.4 414.3 452.1C417.1 451.9 419.8 451.5 422.5 450.9C425.3 450.3 428.0 449.6 430.6 448.6C433.3 447.7 435.9 446.7 438.4 445.4C441.0 444.2 443.5 442.8 445.9 441.2C448.3 439.7 451.8 437.0 453.0 436.1L451.3 435.2C450.1 436.0 446.7 438.5 444.3 439.9C441.9 441.4 439.5 442.6 437.0 443.7C434.5 444.8 431.9 445.8 429.3 446.6C426.7 447.4 424.1 448.0 421.4 448.5C418.8 448.9 416.1 449.3 413.3 449.4C410.6 449.5 407.9 449.5 405.2 449.3C402.4 449.1 399.7 448.8 396.9 448.3C394.2 447.8 391.4 447.1 388.7 446.3C385.9 445.4 383.2 444.4 380.5 443.3C377.8 442.1 375.1 440.8 372.4 439.4C369.8 437.9 367.1 436.3 364.6 434.5C362.0 432.8 359.4 430.9 356.9 428.9C354.4 426.8 352.0 424.6 349.6 422.3C347.2 420.0 344.9 417.6 342.7 415.0C340.4 412.5 338.2 409.8 336.1 407.0C334.0 404.2 332.0 401.3 330.0 398.3C328.1 395.3 326.2 392.2 324.5 389.1C322.7 385.9 321.0 382.6 319.4 379.2C317.9 375.9 316.4 372.5 315.0 369.0C313.6 365.5 312.4 361.9 311.2 358.4C310.0 354.8 309.0 351.1 308.0 347.4C307.1 343.7 306.3 340.0 305.5 336.3C304.8 332.5 304.2 328.8 303.7 325.0C303.3 321.2 302.9 317.5 302.7 313.7C302.4 309.9 302.3 306.2 302.3 302.4C302.3 298.7 302.4 295.0 302.6 291.3C302.9 287.6 303.2 283.9 303.7 280.3C304.1 276.7 304.2 273.8 305.4 269.7C306.7 265.6 309.1 260.3 311.0 256.0C312.9 251.7 314.8 248.2 317.0 244.0C319.2 239.8 321.8 235.2 324.5 231.0C327.2 226.8 329.6 222.7 333.0 219.0C336.4 215.3 340.4 211.8 345.0 208.8C349.6 205.8 358.2 202.1 360.9 200.8Z" fill="#393e49" />
<path d="M360.9 200.8C358.2 202.1 349.6 205.8 345.0 208.8C340.4 211.8 336.4 215.3 333.0 219.0C329.6 222.7 327.2 226.8 324.5 231.0C321.8 235.2 319.2 239.8 317.0 244.0C314.8 248.2 312.9 251.7 311.0 256.0C309.1 260.3 306.7 265.6 305.4 269.7C304.2 273.8 304.1 276.7 303.7 280.3C303.2 283.9 302.9 287.6 302.6 291.3C302.4 295.0 302.3 298.7 302.3 302.4C302.3 306.2 302.4 309.9 302.7 313.7C302.9 317.5 303.3 321.2 303.7 325.0C304.2 328.8 304.8 332.5 305.5 336.3C306.3 340.0 307.1 343.7 308.0 347.4C309.0 351.1 310.0 354.8 311.2 358.4C312.4 361.9 313.6 365.5 315.0 369.0C316.4 372.5 317.9 375.9 319.4 379.2C321.0 382.6 322.7 385.9 324.5 389.1C326.2 392.2 328.1 395.3 330.0 398.3C332.0 401.3 334.0 404.2 336.1 407.0C338.2 409.8 340.4 412.5 342.7 415.0C344.9 417.6 347.2 420.0 349.6 422.3C352.0 424.6 354.4 426.8 356.9 428.9C359.4 430.9 362.0 432.8 364.6 434.5C367.1 436.3 369.8 437.9 372.4 439.4C375.1 440.8 377.8 442.1 380.5 443.3C383.2 444.4 385.9 445.4 388.7 446.3C391.4 447.1 394.2 447.8 396.9 448.3C399.7 448.8 402.4 449.1 405.2 449.3C407.9 449.5 410.6 449.5 413.3 449.4C416.1 449.3 418.8 448.9 421.4 448.5C424.1 448.0 426.7 447.4 429.3 446.6C431.9 445.8 434.5 444.8 437.0 443.7C439.5 442.6 441.9 441.4 444.3 439.9C446.7 438.5 450.1 436.0 451.3 435.2L450.0 428.0L458.8 413.8L445.0 390.0L420.0 300.0L407.2 211.5L399.8 206.8L392.3 202.3L384.8 199.7L369.9 198.9L360.9 200.8Z" fill="url(#gBore)" />
<path d="M348.0 204.0C346.3 207.5 340.7 217.3 338.0 225.0C335.3 232.7 333.3 242.5 332.0 250.0C330.7 257.5 330.2 262.5 330.0 270.0C329.8 277.5 330.2 286.7 331.0 295.0C331.8 303.3 332.7 311.7 335.0 320.0C337.3 328.3 340.8 335.7 345.0 345.0C349.2 354.3 354.8 366.3 360.0 376.0C365.2 385.7 370.0 394.7 376.0 403.0C382.0 411.3 387.8 418.7 396.0 426.0C404.2 433.3 420.2 443.5 425.0 447.0L430.0 441.0C426.5 438.2 415.3 430.2 409.0 424.0C402.7 417.8 397.5 411.8 392.0 403.8C386.5 395.8 379.9 382.7 376.2 376.0C372.5 369.3 372.5 369.0 370.0 363.8C367.5 358.6 363.7 352.3 361.2 345.0C358.7 337.7 356.6 328.3 355.0 320.0C353.4 311.7 352.5 303.3 351.9 295.0C351.3 286.7 350.8 279.2 351.2 270.0C351.6 260.8 352.9 248.3 354.0 240.0C355.1 231.7 356.2 226.8 358.0 220.0C359.8 213.2 363.8 202.9 365.0 199.5Z" fill="url(#gB11)" />
<path d="M365.0 199.5C363.8 202.9 359.8 213.2 358.0 220.0C356.2 226.8 355.1 231.7 354.0 240.0C352.9 248.3 351.6 260.8 351.2 270.0C350.8 279.2 351.3 286.7 351.9 295.0C352.5 303.3 353.4 311.7 355.0 320.0C356.6 328.3 358.7 337.7 361.2 345.0C363.7 352.3 367.5 358.6 370.0 363.8C372.5 369.0 372.5 369.3 376.2 376.0C379.9 382.7 386.5 395.8 392.0 403.8C397.5 411.8 402.7 417.8 409.0 424.0C415.3 430.2 426.5 438.2 430.0 441.0L448.8 427.5C446.5 425.1 439.5 418.1 435.0 413.0C430.5 407.9 426.2 402.3 422.0 397.0C417.8 391.7 413.7 386.2 410.0 381.0C406.3 375.8 402.8 370.7 400.0 366.0C397.2 361.3 395.2 357.3 393.0 353.0C390.8 348.7 388.9 345.5 387.0 340.0C385.1 334.5 383.2 327.5 381.9 320.0C380.6 312.5 379.9 303.3 379.4 295.0C378.9 286.7 378.4 279.2 378.8 270.0C379.2 260.8 381.0 248.3 382.0 240.0C383.0 231.7 383.7 226.4 385.0 220.0C386.3 213.6 389.2 204.6 390.0 201.5Z" fill="#ffffff" opacity="0.07"/>
<path d="M384.0 200.5C383.2 203.6 380.3 212.6 379.0 219.0C377.7 225.4 377.0 230.7 376.0 239.0C375.0 247.3 373.2 259.8 372.8 269.0C372.4 278.2 372.9 285.7 373.4 294.0C373.9 302.3 374.6 311.5 375.9 319.0C377.2 326.5 379.1 333.5 381.0 339.0C382.9 344.5 384.8 347.7 387.0 352.0C389.2 356.3 391.2 360.3 394.0 365.0C396.8 369.7 400.3 374.8 404.0 380.0C407.7 385.2 411.8 390.7 416.0 396.0C420.2 401.3 424.5 406.9 429.0 412.0C433.5 417.1 440.5 424.1 442.8 426.5L448.8 427.5C446.5 425.1 439.5 418.1 435.0 413.0C430.5 407.9 426.2 402.3 422.0 397.0C417.8 391.7 413.7 386.2 410.0 381.0C406.3 375.8 402.8 370.7 400.0 366.0C397.2 361.3 395.2 357.3 393.0 353.0C390.8 348.7 388.9 345.5 387.0 340.0C385.1 334.5 383.2 327.5 381.9 320.0C380.6 312.5 379.9 303.3 379.4 295.0C378.9 286.7 378.4 279.2 378.8 270.0C379.2 260.8 381.0 248.3 382.0 240.0C383.0 231.7 383.7 226.4 385.0 220.0C386.3 213.6 389.2 204.6 390.0 201.5Z" fill="url(#gB22)" />
<path d="M391.6 201.5C390.8 204.6 387.9 213.6 386.6 220.0C385.3 226.4 384.6 231.7 383.6 240.0C382.6 248.3 380.8 260.8 380.4 270.0C380.0 279.2 380.5 286.7 381.0 295.0C381.5 303.3 382.2 312.5 383.5 320.0C384.8 327.5 386.8 334.5 388.6 340.0C390.5 345.5 392.4 348.7 394.6 353.0C396.8 357.3 398.8 361.3 401.6 366.0C404.4 370.7 407.9 375.8 411.6 381.0C415.3 386.2 419.4 391.7 423.6 397.0C427.8 402.3 432.1 407.9 436.6 413.0C441.1 418.1 448.1 425.1 450.4 427.5" fill="none" stroke="#4e5566" stroke-width="1.6" opacity="0.55"/>
<path d="M379.4 295.0C379.8 299.2 380.6 312.5 381.9 320.0C383.2 327.5 385.1 334.5 387.0 340.0C388.9 345.5 390.8 348.7 393.0 353.0C395.2 357.3 397.2 361.3 400.0 366.0C402.8 370.7 408.3 378.5 410.0 381.0" fill="none" stroke="#e6eefc" stroke-linecap="round" filter="url(#fb2)" stroke-width="1.2" opacity="0.75"/>
<path d="M407.2 211.5C406.7 212.8 404.8 216.2 404.0 219.0C403.2 221.8 402.8 224.3 402.3 228.0C401.8 231.7 401.4 236.3 401.2 241.0C400.9 245.7 400.9 253.7 400.8 256.2L400.8 256.2L403.8 257.0L406.2 296.2L402.8 297.5L402.8 297.5C403.1 300.1 403.6 307.8 404.5 313.0C405.4 318.2 406.6 324.2 408.0 329.0C409.4 333.8 411.0 337.3 413.0 342.0C415.0 346.7 417.4 351.9 420.0 357.0C422.6 362.1 425.6 367.4 428.5 372.5C431.4 377.6 434.3 382.8 437.5 387.5C440.7 392.2 443.9 396.6 447.5 401.0C451.1 405.4 456.9 411.7 458.8 413.8L458.8 413.8C459.8 411.5 463.3 404.4 465.0 400.0C466.7 395.6 467.7 392.7 468.8 387.5C469.9 382.3 471.2 373.6 471.9 368.8C472.6 364.0 472.9 360.5 473.1 358.8L473.1 358.8L469.0 358.8L466.5 320.0L466.5 320.0C465.8 315.1 463.9 299.1 462.0 290.7C460.1 282.3 457.1 275.1 455.0 269.6C452.9 264.2 452.0 262.4 449.5 258.0C447.0 253.6 443.0 247.3 440.0 243.0C437.0 238.7 433.4 234.7 431.3 232.0C429.2 229.3 429.2 228.9 427.1 226.6C425.0 224.3 421.8 220.6 418.5 218.1C415.2 215.6 409.1 212.6 407.2 211.5Z" fill="#ffffff" />
<path d="M400.8 256.2L403.8 257.0L406.2 296.2L402.8 297.5Z" fill="#8f9ab2" /></svg>
<svg class="abs" style="left:876px;top:66px" width="40" height="350" viewBox="876 66 40 350"><defs><radialGradient id="gLens" cx="0.62" cy="0.62" r="0.75"><stop offset="0" stop-color="#fff"/><stop offset="0.62" stop-color="#fbfbfb"/><stop offset="0.8" stop-color="#c9c9c9"/><stop offset="1" stop-color="#9a9a9a"/></radialGradient></defs><g font-family="Liberation Sans, sans-serif" font-weight="bold" font-size="12.2px" fill="#111"><rect x="881.0" y="93.0" width="5.6" height="4.3" fill="#e2001a"/><path d="M881.0 92.6L881.0 77.2L889.6 84.8L886.6 84.8L886.6 92.6Z" fill="#0a9a3c"/><path d="M887.2 97.3L902.0 97.3L894.8 89.6L894.8 93.2L887.2 93.2Z" fill="#1c2a8c"/><text x="885.6" y="81.2">Y</text><text x="899.2" y="93.0">Z</text><rect x="902.2" y="131.8" width="5.6" height="4.6" fill="#e2001a"/><path d="M907.8 131.4L907.8 116.0L899.2 123.6L902.2 123.6L902.2 131.4Z" fill="#0a9a3c"/><path d="M901.8 136.4L887.0 136.4L894.2 128.4L894.2 132.0L901.8 132.0Z" fill="#1c2a8c"/><text x="894.4" y="119.8">Y</text><text x="881.8" y="132.2">Z</text><rect x="881.0" y="171.0" width="5.6" height="4.2" fill="#0a9a3c"/><path d="M881.0 170.6L881.0 155.2L889.6 162.8L886.6 162.8L886.6 170.6Z" fill="#1c2a8c"/><path d="M887.2 175.2L902.0 175.2L894.8 167.6L894.8 171.2L887.2 171.2Z" fill="#e2001a"/><text x="886.4" y="159.2">Z</text><text x="899.0" y="171.0">X</text><rect x="881.0" y="187.9" width="5.6" height="4.2" fill="#0a9a3c"/><path d="M887.2 187.9L902.0 187.9L894.8 195.6L894.8 192.0L887.2 192.0Z" fill="#e2001a"/><path d="M881.0 192.6L881.0 207.4L889.6 199.8L886.6 199.8L886.6 192.6Z" fill="#1c2a8c"/><text x="899.0" y="204.1">X</text><text x="888.6" y="213.0">Z</text><rect x="881.0" y="226.6" width="5.6" height="4.2" fill="#1c2a8c"/><path d="M887.2 226.6L902.0 226.6L894.8 234.3L894.8 230.7L887.2 230.7Z" fill="#e2001a"/><path d="M881.0 231.3L881.0 246.4L889.6 238.8L886.6 238.8L886.6 231.3Z" fill="#0a9a3c"/><text x="899.0" y="242.7">X</text><text x="888.4" y="251.7">Y</text><rect x="881.0" y="288.0" width="5.6" height="4.5" fill="#1c2a8c"/><path d="M881.0 287.6L881.0 272.4L889.6 280.0L886.6 280.0L886.6 287.6Z" fill="#0a9a3c"/><path d="M887.2 292.5L902.0 292.5L894.8 284.6L894.8 288.2L887.2 288.2Z" fill="#e2001a"/><text x="885.6" y="275.8">Y</text><text x="899.0" y="288.1">X</text></g><path d="M891.6 320L883 328.3" stroke="#111" stroke-width="3.8" stroke-linecap="round"/><circle cx="898.5" cy="313.4" r="8.3" fill="url(#gLens)" stroke="#161616" stroke-width="1.7"/><path d="M894.6 324.3H907.4M900.8 318.2V330.4" stroke="#1a1a1a" stroke-width="2.2" fill="none"/><path d="M891.6 359.2L883 367.5" stroke="#111" stroke-width="3.8" stroke-linecap="round"/><circle cx="898.5" cy="352.6" r="8.3" fill="url(#gLens)" stroke="#161616" stroke-width="1.7"/><path d="M894.6 366H907.4" stroke="#1a1a1a" stroke-width="2.2" fill="none"/><rect x="881.3" y="383" width="26.4" height="25" fill="#a4a4a4" stroke="#3a3a3a" stroke-width="1.5"/><rect x="882.8" y="384.5" width="23.4" height="22" fill="none" stroke="#dcdcdc" stroke-width="1"/><path d="M887.4 401.4L882 407.6" stroke="#111" stroke-width="3.8" stroke-linecap="round"/><circle cx="894.0" cy="395.4" r="8.0" fill="url(#gLens)" stroke="#161616" stroke-width="1.7"/></svg>
<!-- nav row -->
<div class="abs nb" style="left:767.6px;width:38.8px;top:551.6px;height:32.6px;background:#f8f8f8;border:1px solid #ececec"></div>
<div class="abs nb" style="left:836.7px;width:38.6px;top:551.6px;height:32.6px;background:#f8f8f8;border:1px solid #ececec"></div>
<div class="abs nb" style="left:878px;top:551px;width:40px;height:34px;background:#fdfdfd;border:1px solid #cfcfcf;border-bottom-color:#b5b5b5"></div>
<svg class="abs" style="left:768px;top:551px" width="150" height="34" viewBox="768 551 150 34">
<defs><linearGradient id="ga" x1="0" y1="0" x2="0" y2="1"><stop offset="0" stop-color="#bdbdbd"/><stop offset="0.5" stop-color="#a2a2a2"/><stop offset="1" stop-color="#b4b4b4"/></linearGradient>
<linearGradient id="gb" x1="0" y1="0" x2="0" y2="1"><stop offset="0" stop-color="#3aa8f4"/><stop offset="1" stop-color="#1686e4"/></linearGradient></defs>
<path d="M775 568.2L786.2 557v5.7H799v11H786.2v5.8z" fill="url(#ga)" stroke="#9a9a9a" stroke-width="0.8"/>
<path d="M868 568.2L856.8 557v5.7H844v11h12.8v5.8z" fill="url(#ga)" stroke="#9a9a9a" stroke-width="0.8"/>
<rect x="886.6" y="563.4" width="22.8" height="8" fill="url(#gb)" stroke="#0a6ccc" stroke-width="1.4"/>
</svg>
<div class="abs lbl" style="left:808px;top:557.8px;font-size:18px;letter-spacing:-0.2px">1/1</div>
<!-- form -->
<div class="abs lbl" style="left:18.6px;top:601.3px">Maximum mesh size</div>
<div class="abs lbl" style="left:18.6px;top:641.3px;letter-spacing:0.14px">Minimum mesh size</div>
<div class="abs cb" style="top:680px"></div>
<div class="abs cb" style="top:719px"></div>
<svg class="abs" style="left:19px;top:680px" width="19" height="58" viewBox="19 680 19 58"><path d="M25 690.4l2.4 2.3 5.6-5.5M25 729.6l2.4 2.3 5.6-5.5" fill="none" stroke="#fff" stroke-width="1.1"/></svg>
<div class="abs lbl" style="left:45.2px;top:681px;letter-spacing:-0.03px">Generate second order mesh</div>
<div class="abs lbl" style="left:45px;top:719.8px;letter-spacing:-0.17px">Use hexahedral mesh</div>
<div class="abs lbl" style="left:19px;top:760.2px;letter-spacing:0.09px">Tolerance for merging parts</div>
<div class="abs lbl" style="left:679px;width:100px;text-align:center;top:601.3px">hmax</div>
<div class="abs lbl" style="left:680px;width:100px;text-align:center;top:641.3px">hmin</div>
<div class="abs lbl" style="left:678px;width:100px;text-align:center;top:760.2px">tol</div>
<div class="abs inp" style="top:595.6px">10</div>
<div class="abs inp" style="top:636px">0</div>
<div class="abs inp" style="top:755px">0.001</div>
<div class="abs lbl" style="left:885.6px;top:601.3px;letter-spacing:0.6px">mm</div>
<div class="abs lbl" style="left:885.6px;top:641.3px;letter-spacing:0.6px">mm</div>
<div class="abs lbl" style="left:885.6px;top:760.2px;letter-spacing:0.6px">mm</div>
<div class="abs btn" style="left:321px">OK</div>
<div class="abs btn" style="left:443px">Mesh</div>
<div class="abs btn dis" style="left:564px">Merge</div>
<div class="abs btn" style="left:686px;letter-spacing:0.7px">Modify</div>
<div class="abs btn" style="left:807px">Cancel</div>
</body></html>
